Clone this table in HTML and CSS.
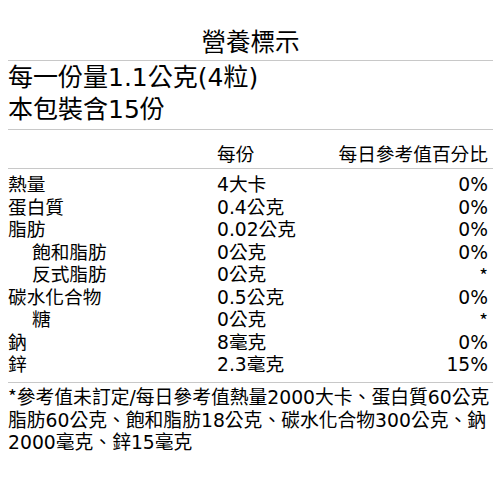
FILE: index.html
```html
<!DOCTYPE html>
<html lang="zh-Hant">
<head>
<meta charset="utf-8">
<link rel="stylesheet" href="styles.css">
</head>
<body>
<div class="label">
  <div class="title">營養標示</div>
  <div class="serving">
    <div>每一份量1.1公克(4粒)</div>
    <div>本包裝含15份</div>
  </div>
  <div class="head row">
    <span></span><span>每份</span><span class="pct">每日參考值百分比</span>
  </div>
  <div class="rows">
    <div class="row"><span>熱量</span><span>4大卡</span><span class="pct">0%</span></div>
    <div class="row"><span>蛋白質</span><span>0.4公克</span><span class="pct">0%</span></div>
    <div class="row"><span>脂肪</span><span>0.02公克</span><span class="pct">0%</span></div>
    <div class="row"><span class="sub">飽和脂肪</span><span>0公克</span><span class="pct">0%</span></div>
    <div class="row"><span class="sub">反式脂肪</span><span>0公克</span><span class="pct na">*</span></div>
    <div class="row"><span>碳水化合物</span><span>0.5公克</span><span class="pct">0%</span></div>
    <div class="row"><span class="sub">糖</span><span>0公克</span><span class="pct na">*</span></div>
    <div class="row"><span>鈉</span><span>8毫克</span><span class="pct">0%</span></div>
    <div class="row"><span>鋅</span><span>2.3毫克</span><span class="pct">15%</span></div>
  </div>
  <div class="note"><span class="ast">*</span>參考值未訂定/每日參考值熱量2000大卡、蛋白質60公克脂肪60公克、飽和脂肪18公克、碳水化合物300公克、鈉2000毫克、鋅15毫克</div>
</div>
</body>
</html>
```
FILE: styles.css
```css
body {
  margin: 8px;
  background: #fff;
  color: #000;
  font-family: "DejaVu Sans", "Noto Sans CJK TC", sans-serif;
}
.title {
  font-size: 24.5px;
  line-height: 30px;
  text-align: center;
  padding-top: 20px;
  padding-bottom: 2px;
  border-bottom: 1px solid #c8c8c8;
}
.serving {
  font-size: 25px;
  line-height: 32px;
  padding: 1px 0 3px;
  border-bottom: 1px solid #c8c8c8;
}
.row {
  display: grid;
  grid-template-columns: 209px 1fr auto;
  font-size: 18.7px;
  line-height: 22.5px;
  padding-right: 5px;
}
.head {
  padding-top: 14px;
  padding-bottom: 1.5px;
  border-bottom: 1px solid #c8c8c8;
}
.rows {
  padding: 5px 0 5.5px;
  border-bottom: 1px solid #c8c8c8;
}
.pct {
  text-align: right;
}
.na {
  font-family: "Noto Sans CJK TC", sans-serif;
}
.sub {
  padding-left: 24px;
}
.ast {
  font-family: "Noto Sans CJK TC", sans-serif;
  line-height: 18px;
}
.note {
  font-size: 18.8px;
  line-height: 22.7px;
  padding-top: 4px;
}
```
